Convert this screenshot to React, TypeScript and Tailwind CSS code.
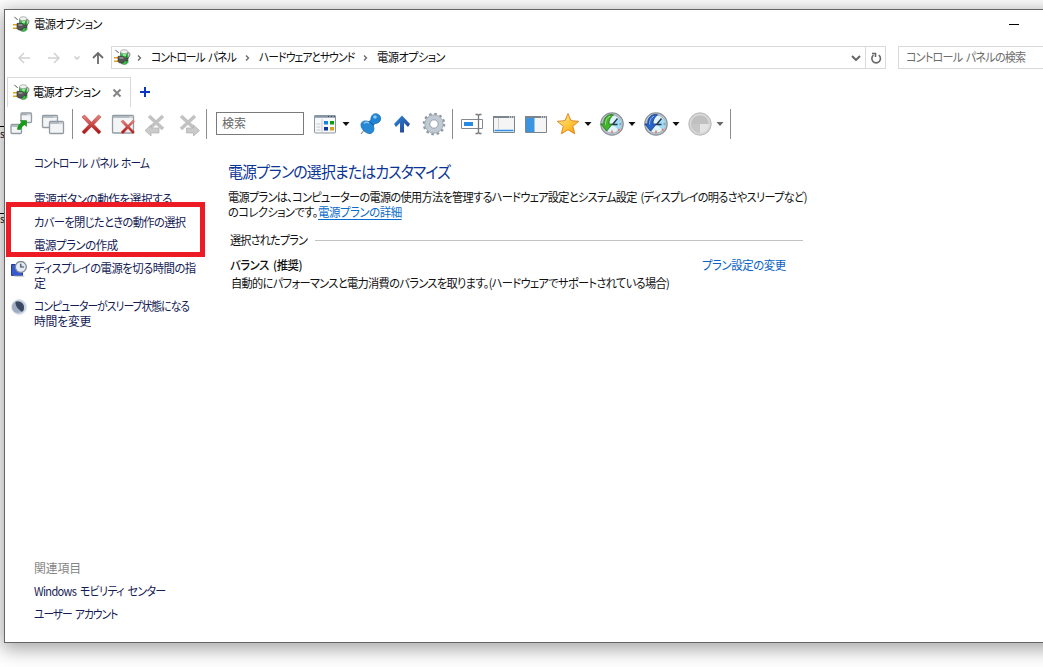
import React, { useLayoutEffect, useRef, useState } from "react";
import clsx from "clsx";

type LineProps = {
  text: string;
  width: number;
  className?: string;
};

// One line of UI text, condensed and tracked so that it fills the given width
const Line = ({ text, width, className }: LineProps) => {
  const ref = useRef<HTMLSpanElement>(null);
  const [fit, setFit] = useState({ scale: 1, spacing: 0 });

  useLayoutEffect(() => {
    if (!ref.current) return;
    const natural = ref.current.offsetWidth;
    const scale = Math.min(1, Math.sqrt(width / natural));
    setFit({ scale, spacing: (width / scale - natural) / text.length });
  }, [text, width]);

  return (
    <span className="relative -top-px inline-block shrink-0" style={{ width }}>
      <span
        ref={ref}
        className={clsx(
          "inline-block origin-left whitespace-pre [word-spacing:2px] [font-feature-settings:'palt']",
          className
        )}
        style={{ letterSpacing: fit.spacing, transform: `scaleX(${fit.scale})` }}
      >
        {text}
      </span>
    </span>
  );
};

const PowerIcon = () => (
  <svg viewBox="0 0 17 17" className="w-[17px] h-[17px] shrink-0">
    <path d="M13 4c2.500-1 3.500.5 2.500 3l-2 3" fill="none" stroke="#6b6b6b" strokeWidth="1" />
    <path d="M6.500 3h7.500v10.500c-1.500 2.500-6 2.500-7.500 0z" fill="#3cc04a" stroke="#4a7a50" strokeWidth=".7" />
    <ellipse cx="10.200" cy="2.700" rx="3.700" ry="2" fill="#eef3ee" stroke="#8a8a8a" strokeWidth=".6" />
    <path d="M9 6h3" stroke="#b5f0b0" strokeWidth="1.500" />
    <path d="M12.500 6.500v7" stroke="#1d8a2c" strokeWidth="1.200" />
    <path d="M1.500.8c.5 2 2.500 1 3 3.200" fill="none" stroke="#666" strokeWidth="1" />
    <path d="M0 8.700h4.500M0 12.200h4.500" stroke="#dfa51e" strokeWidth="1.500" />
    <path d="M4 7.300h5l2 1.700h2.500v2.500H11l-2 2.500H5.500L4 12.500z" fill="#555" stroke="#333" strokeWidth=".6" />
    <path d="M5.500 9h4" stroke="#c0c0c0" strokeWidth="1" />
  </svg>
);

const Tool = ({ children, className }: { children: React.ReactNode; className?: string }) => (
  <button className={clsx("w-8 h-6 shrink-0 flex items-center justify-center", className)}>
    <svg viewBox="0 0 24 24" className="w-6 h-6" fill="none">
      {children}
    </svg>
  </button>
);

const Caret = ({ className }: { className?: string }) => (
  <span className={clsx("w-3 h-6 shrink-0 flex items-center", className)}>
    <svg viewBox="0 0 8 4" className="w-2 h-1" fill="currentColor">
      <path d="M.5 0h7L4 4z" />
    </svg>
  </span>
);

const Separator = ({ className }: { className?: string }) => (
  <div className={clsx("w-px h-[30px] shrink-0 bg-[#8c8c8c]", className)} />
);

const MiniWindow = ({ x, y, w, h }: { x: number; y: number; w: number; h: number }) => (
  <>
    <rect x={x} y={y} width={w} height={h} rx="1" fill="#f3f4f5" stroke="#929aa2" strokeWidth="1.300" />
    <path d={`M${x} ${y + 1.5}h${w}`} stroke="#a3acb4" strokeWidth="1.500" />
    <path d={`M${x + w - 4} ${y + 1.5}h1M${x + w - 2} ${y + 1.5}h1`} stroke="#fff" />
  </>
);

const HistoryIcon = ({ fill, stroke }: { fill: string; stroke: string }) => (
  <>
    <circle cx="12" cy="12" r="11.200" fill="#c3c9ce" stroke="#8a9299" strokeWidth="1.200" />
    <circle cx="12" cy="12" r="9.200" fill="#dff3fd" stroke="#8898a4" strokeWidth=".7" />
    <path d="M12 12 19 6a9 9 0 0 1 0 12z" fill="#9edcf7" />
    <path d="M19.500 12h1.500M12 3v1" stroke="#666" />
    <path d="M12 18.500v2.500M18 17l1.500 1.500" stroke="#f36d4b" strokeWidth="1.500" />
    <path d="M17.500 6.500 12.500 12.500h5" stroke="#273746" strokeWidth="1.400" />
    <path d="M13.500 2.800C8.500 1.500 3.500 5 3.800 12H.8l6 7 5.500-7H9c-.3-4 1.500-6.500 4.500-9.200z" fill={fill} stroke={stroke} strokeWidth=".8" />
    <path d="M10 4.200C7 5.500 5.500 8 5.500 12.500" stroke="#fff" strokeOpacity=".5" />
  </>
);

const Toolbar = () => (
  <div className="h-[34px] shrink-0 flex items-center">
    <Tool>
      <MiniWindow x={12} y={1} w={10.5} h={9.5} />
      <MiniWindow x={2} y={12.5} w={10.5} h={9} />
      <path d="M8.500 17.500c0-3.500 1.500-5.500 4.500-7l-1.500-2H17.500v6l-1.800-1.800c-1.700 1-2.700 1.300-4.200 4.800z" fill="#12a012" stroke="#087c0b" strokeWidth=".5" />
    </Tool>
    <Tool>
      <MiniWindow x={1.5} y={3.5} w={15} h={12} />
      <MiniWindow x={8.5} y={9.5} w={14} h={12} />
    </Tool>
    <Separator className="ml-[3px]" />
    <Tool className="ml-0.5">
      <defs>
        <linearGradient id="red" x1="0" y1="0" x2="0" y2="1">
          <stop stopColor="#e98582" />
          <stop offset="1" stopColor="#a50d0d" />
        </linearGradient>
      </defs>
      <path d="m3 5 2.500-2 7 7.300L19.500 3 22 5l-7 7.500 7 7.300-2.300 2.200-7.200-7.300L5.300 22 3 19.800l7-7.300z" fill="url(#red)" stroke="#b63a3a" strokeWidth=".6" />
    </Tool>
    <Tool>
      <MiniWindow x={1.5} y={3.5} w={21} h={17.5} />
      <path d="m10 9.500 2-1.500 5 5.200L22 8l1.500 1.500-5 5.300 5 5.200-1.500 1.700-5-5.200-5 5.200L10 20l5-5.200z" fill="url(#red)" stroke="#c65b58" strokeWidth=".5" />
    </Tool>
    <Tool>
      <path d="M6 4 20 17M20 4 6 17" stroke="#c2c2c2" strokeWidth="3.500" />
      <path d="m2 18.500 6-5.500v3h8v5H8v3z" fill="#cacaca" stroke="#b4b4b4" strokeWidth=".8" />
    </Tool>
    <Tool className="ml-0.5">
      <path d="M4 4 18 17M18 4 4 17" stroke="#c2c2c2" strokeWidth="3.500" />
      <path d="M22.500 18.500 16.500 13v3h-7v5h7v3z" fill="#cacaca" stroke="#b4b4b4" strokeWidth=".8" />
    </Tool>
    <Separator className="ml-px" />
    <div className="ml-[9px] mb-px w-[88px] h-[23px] shrink-0 border border-[#7a7a7a] pl-[5px] flex items-center text-[#666]">
      <Line text="検索" width={24} />
    </div>
    <Tool className="ml-[5px]">
      <rect x="1.500" y="3.500" width="21" height="17.500" rx="1" fill="#f7f8f9" stroke="#8b969f" />
      <path d="M1.500 4.500h21" stroke="#8795a3" strokeWidth="2.500" />
      <path d="M15 4.500h1M18 4.500h1M21 4.500h1" stroke="#34475a" />
      <path d="M3.500 12h4M3.500 15h4M3.500 18h4M9 7v14" stroke="#c4c8cc" />
      <path d="M11 9h4v3.500h-4z" fill="#1684e0" />
      <path d="M17 9h4v3.500h-4z" fill="#08a008" />
      <path d="M11 15h4v3.500h-4z" fill="#09369c" />
      <path d="M17 15h4v3.500h-4z" fill="#d6a419" />
    </Tool>
    <Caret className="pl-px" />
    <Tool className="ml-px">
      <path d="m7 17-4 5" stroke="#8b8b8b" strokeWidth="1.200" />
      <path d="M13 8c-.5-3 1.500-6.300 4.500-6.300s5.500 2.500 5.200 5.300-2.700 4.500-5.700 4.500l-2 2.500-5-4z" fill="#2084d4" stroke="#1565aa" strokeWidth=".7" />
      <path d="M3 12c1-3 4-3.800 7.500-2.500 4.500 2 6.500 6 5 9.500-1 2-3 3-5 2.500C6 20 2.500 16 3 12z" fill="#2788d5" stroke="#1665aa" strokeWidth=".7" />
      <path d="M12 10.500c1.500.5 2.500 1.500 3 3" stroke="#14589a" />
      <circle cx="17" cy="5" r="1.800" fill="#8ccaf5" />
      <path d="M6 11.500c1-1 3-1.500 5-.5" stroke="#87c6f2" strokeWidth="1.500" />
    </Tool>
    <Tool>
      <defs>
        <linearGradient id="blue" x1="0" y1="0" x2="1" y2="1">
          <stop stopColor="#2c8be0" />
          <stop offset="1" stopColor="#243a88" />
        </linearGradient>
      </defs>
      <path d="m12 3.500 8 8.500-2 3-4-4v9.500h-4V11l-4 4-2-3z" fill="url(#blue)" />
    </Tool>
    <Tool>
      <circle cx="12" cy="12" r="9.800" stroke="#8d99a5" strokeWidth="3" strokeDasharray="2.500 2.630" />
      <circle cx="12" cy="12" r="6.800" stroke="#c1cad2" strokeWidth="5" />
      <circle cx="12" cy="12" r="9.200" stroke="#9ba7b2" strokeWidth=".8" />
      <circle cx="12" cy="12" r="4.200" fill="#fff" stroke="#929daa" />
    </Tool>
    <Separator className="ml-0.5" />
    <Tool className="ml-[3px]">
      <path d="M1.500 7.500h21v9h-21z" fill="#fff" stroke="#858a90" />
      <path d="M4 10h9v4H4z" fill="#268be1" />
      <path d="M15.500 2.500h2l1 1 1-1h2M18.500 3v18M15.500 21.500h2l1-1 1 1h2" stroke="#777" strokeWidth="1.300" />
    </Tool>
    <Tool>
      <path d="M1.500 4.500h21v16h-21z" fill="#f5f5f5" stroke="#7c848c" />
      <path d="M1 5h22" stroke="#7c848c" strokeWidth="2" />
      <path d="M17 5h1M19 5h1M21 5h1" stroke="#fff" />
      <path d="M6.500 6v11" stroke="#ccc" />
      <path d="M2.500 18.500h19" stroke="#2f8fe0" strokeWidth="1.500" />
    </Tool>
    <Tool>
      <path d="M1.500 4.500h21v16h-21z" fill="#f5f5f5" stroke="#7c848c" />
      <path d="M1 5h22" stroke="#7c848c" strokeWidth="2" />
      <path d="M17 5h1M19 5h1M21 5h1" stroke="#fff" />
      <path d="M2 6h8.500v14H2z" fill="#3b94df" />
    </Tool>
    <Tool>
      <defs>
        <linearGradient id="gold" x1="0" y1="0" x2="1" y2="1">
          <stop stopColor="#fff0a0" />
          <stop offset=".6" stopColor="#ffc132" />
          <stop offset="1" stopColor="#ed910c" />
        </linearGradient>
      </defs>
      <path d="m12 1.500 3 7.200 7.700.6-5.900 5 2 7.500L12 17.700l-6.700 4.100 2-7.500-6-5L9 8.700z" fill="url(#gold)" stroke="#df8a22" strokeLinejoin="round" />
    </Tool>
    <Caret />
    <Tool>
      <HistoryIcon fill="#43b52a" stroke="#236e19" />
    </Tool>
    <Caret />
    <Tool>
      <HistoryIcon fill="#2765c8" stroke="#153a8b" />
    </Tool>
    <Caret />
    <Tool>
      <circle cx="12" cy="12" r="11.200" fill="#d5d5d5" stroke="#b8b8b8" />
      <circle cx="12" cy="12" r="9.300" fill="#c0c0c0" stroke="#dedede" />
      <path d="M12 12h9a9 9 0 0 1-9 9z" fill="#e3e3e3" />
      <path d="M12 12H3a9 9 0 0 0 9 9z" fill="#c6c6c6" />
    </Tool>
    <Caret className="text-[#666]" />
    <Separator className="ml-0.5" />
  </div>
);

const Crumb = () => (
  <svg viewBox="0 0 5 8" className="w-[5px] h-2 shrink-0" fill="none">
    <path d="m1 1.500 2.500 2.500L1 6.500" stroke="#666" strokeWidth="1.300" />
  </svg>
);

const AddressBar = () => (
  <div className="mt-[7px] h-[23px] shrink-0 flex">
    <div className="w-[106px] shrink-0 flex items-center pl-[13px]">
      <svg viewBox="0 0 12 12" className="w-3 h-3" fill="none" stroke="#d1d1d1" strokeWidth="1.500">
        <path d="M12 6H1M6 1 1 6l5 5" />
      </svg>
      <svg viewBox="0 0 12 12" className="ml-[18px] w-3 h-3" fill="none" stroke="#d1d1d1" strokeWidth="1.500">
        <path d="M0 6h11M6 1l5 5-5 5" />
      </svg>
      <svg viewBox="0 0 6 4" className="ml-3.5 w-1.5 h-1" fill="none" stroke="#ccc" strokeWidth="1.500">
        <path d="m.5.5 2.500 2.500L5.500.5" />
      </svg>
      <svg viewBox="0 0 12 12" className="ml-3 w-3 h-3" fill="none" stroke="#6b6b6b" strokeWidth="1.800">
        <path d="M6 12V1M1 6l5-5 5 5" />
      </svg>
    </div>
    <div className="w-[775px] shrink-0 border border-[#d9d9d9] flex items-center pl-0.5">
      <PowerIcon />
      <div className="ml-[6px] flex items-center gap-[9px]">
        <Crumb />
        <Line text="コントロール パネル" width={85} />
        <Crumb />
        <Line text="ハードウェアとサウンド" width={95} />
        <Crumb />
        <Line text="電源オプション" width={68} />
      </div>
      <div className="ml-auto flex items-center h-full">
        <svg viewBox="0 0 10 6" className="mr-1 w-2.5 h-1.5" fill="none" stroke="#666" strokeWidth="2">
          <path d="m1 1 4 4 4-4" />
        </svg>
        <div className="w-5 h-full border-l border-[#d9d9d9] flex items-center justify-center">
          <svg viewBox="0 0 12 12" className="w-3 h-3" fill="none" stroke="#666" strokeWidth="1.600">
            <path d="M8.800 3.200A4.300 4.300 0 1 1 3.500 3.200M2 1.500h3.500V5" />
          </svg>
        </div>
      </div>
    </div>
    <div className="ml-3 w-[160px] shrink-0 border border-[#d9d9d9] flex items-center pl-[7px] text-[#6d6d6d]">
      <Line text="コントロール パネルの検索" width={119} />
    </div>
  </div>
);

const Tabs = () => (
  <div className="mt-2 h-[30px] shrink-0 flex items-center pl-0.5">
    <div className="w-[124px] h-full border border-b-0 border-[#d9d9d9] flex items-center pl-[5px]">
      <PowerIcon />
      <span className="ml-[3px]">
        <Line text="電源オプション" width={67} className="text-black" />
      </span>
      <svg viewBox="0 0 10 10" className="ml-[12px] w-2.5 h-2.5" fill="none" stroke="#858585" strokeWidth="2">
        <path d="m1.500 1.500 7 7m0-7-7 7" />
      </svg>
    </div>
    <svg viewBox="0 0 10 10" className="ml-[9px] w-2.5 h-2.5" stroke="#0a36c4" strokeWidth="2">
      <path d="M5 0v10M0 5h10" />
    </svg>
  </div>
);

const Sidebar = () => (
  <nav className="relative w-[200px] shrink-0 h-full flex flex-col text-[#151c55] leading-[15px] pt-[15px] pb-5">
    <div className="pl-[29px] h-[15px] flex">
      <Line text="コントロール パネル ホーム" width={115} />
    </div>
    <div className="mt-[21px] pl-[29px] flex flex-col items-start gap-2">
      <Line text="電源ボタンの動作を選択する" width={138} />
      <Line text="カバーを閉じたときの動作の選択" width={151} />
      <Line text="電源プランの作成" width={84} />
    </div>
    <div className="mt-2 flex pl-1.5">
      <svg viewBox="0 0 16 16" className="w-4 h-4 shrink-0" fill="none">
        <path d="M.5 3.500h11v11H.5z" fill="#3459d0" stroke="#263c9b" />
        <path d="M2 14.500h10l2 1H4z" fill="#9ba6b3" />
        <circle cx="9.800" cy="6" r="5.500" fill="#e4eaf0" stroke="#7c8794" strokeWidth="1.300" />
        <path d="M9.800 2.800V6H13" stroke="#334760" strokeWidth="1.200" />
      </svg>
      <div className="ml-[7px] flex flex-col items-start">
        <Line text="ディスプレイの電源を切る時間の指" width={162} />
        <Line text="定" width={12} />
      </div>
    </div>
    <div className="mt-2 flex pl-1.5">
      <svg viewBox="0 0 16 16" className="w-4 h-4 shrink-0">
        <circle cx="8" cy="8" r="7.500" fill="#c8d1df" stroke="#dfe4ea" />
        <circle cx="7" cy="8" r="6" fill="#9eabc0" />
        <path d="M4.500 3c4-1.500 8.500 1 8.500 5.500 0 2.500-1 4-2 4.300C7.500 10.500 4.500 8 4.500 3z" fill="#3a4864" />
      </svg>
      <div className="ml-[7px] flex flex-col items-start">
        <Line text="コンピューターがスリープ状態になる" width={155} />
        <Line text="時間を変更" width={57} />
      </div>
    </div>
    <div className="mt-auto pl-[29px] flex flex-col items-start gap-2">
      <Line text="関連項目" width={47} className="text-[#858585]" />
      <Line text="Windows モビリティ センター" width={132} />
      <Line text="ユーザー アカウント" width={83} />
    </div>
    {/* highlight drawn over the lid and plan links */}
    <div className="absolute left-px top-[61px] w-[199px] h-[55px] border-[5px] border-[#ed1c24]" />
  </nav>
);

const PlanPanel = () => (
  <main className="flex-1 pl-[23px] pt-[19px] leading-[15px]">
    <h1 className="h-6 leading-6 text-[16px] text-[#0b3595]">
      <Line text="電源プランの選択またはカスタマイズ" width={222} />
    </h1>
    <div className="mt-[6px] h-[15px] flex">
      <Line
        text="電源プランは、コンピューターの電源の使用方法を管理するハードウェア設定とシステム設定 (ディスプレイの明るさやスリープなど)"
        width={579}
      />
    </div>
    <div className="h-[15px] flex">
      <Line text="のコレクションです。" width={90} />
      <Line text="電源プランの詳細" width={84} className="text-[#0a6ccc] underline underline-offset-2" />
    </div>
    <div className="mt-[13px] ml-0.5 h-[15px] flex items-center">
      <Line text="選択されたプラン" width={77} />
      <div className="ml-2 w-[488px] h-px bg-[#c3c3c3]" />
    </div>
    <div className="mt-[10px] ml-0.5 h-[15px] w-[556px] flex justify-between">
      <Line text="バランス (推奨)" width={72} className="font-medium" />
      <Line text="プラン設定の変更" width={84} className="text-[#0a62c4]" />
    </div>
    <div className="mt-[3px] ml-[3px] h-[15px] flex">
      <Line
        text="自動的にパフォーマンスと電力消費のバランスを取ります。(ハードウェアでサポートされている場合)"
        width={438}
      />
    </div>
  </main>
);

const App = () => {
  return (
    <div className="relative w-[1043px] h-[667px] overflow-hidden bg-white pl-1 pt-[9px] text-[12px] text-[#111] font-['Noto_Sans_CJK_JP',sans-serif]">
      {/* edge of the page behind the window */}
      <div className="absolute left-0 top-[126px] w-1 h-[88px] border-y border-black" />
      <div className="absolute left-0 top-[129px] w-1 text-[10px] leading-[10px] tracking-tighter">s</div>
      <div className="absolute left-0 top-[214px] w-1 text-[10px] leading-[10px] tracking-tighter">s</div>
      <div className="relative w-[1060px] h-[634px] bg-white border border-[#666] shadow-[0_4px_18px_2px_rgba(0,0,0,0.36)] flex flex-col">
        <header className="h-[29px] shrink-0 flex items-center pl-2">
          <PowerIcon />
          <span className="ml-1">
            <Line text="電源オプション" width={68} />
          </span>
          <div className="ml-[907px] w-2.5 h-px shrink-0 bg-black" />
        </header>
        <AddressBar />
        <Tabs />
        <Toolbar />
        <div className="flex-1 min-h-0 flex">
          <Sidebar />
          <PlanPanel />
        </div>
      </div>
    </div>
  );
};

export default App;
